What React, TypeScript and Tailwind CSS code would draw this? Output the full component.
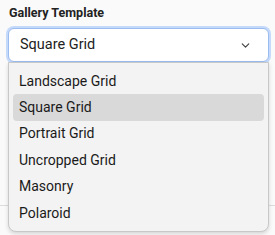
import React from "react";
import { ChevronDown } from "lucide-react";

const options = ["Landscape Grid", "Square Grid", "Portrait Grid", "Uncropped Grid", "Masonry", "Polaroid"];

export default function App() {
  const selected = "Square Grid";
  return (
    <div className="w-[275px] h-[235px] bg-[#fafafa] overflow-hidden relative" style={{ fontFamily: "Roboto, 'Liberation Sans', sans-serif" }}>
      <div className="pl-[9px] pr-[6px] pt-[4px] border-b border-[#dcdcdc] h-[206px]">
        <label className="block text-[12.5px] font-bold text-[#222] leading-[18px]">Gallery Template</label>
        <div className="relative mt-[6px] -ml-px">
          <div className="h-[34px] rounded-[6px] bg-white border border-[#9bbcf0] ring-2 ring-[#c5d9fb] flex items-center justify-between pl-[11px] pr-[16px]">
            <span className="text-[14.5px] text-[#222]">{selected}</span>
            <ChevronDown size={13} strokeWidth={2.2} className="text-[#444]" />
          </div>
          <div className="absolute left-0 right-0 top-[34px] z-10 bg-[#f3f3f3] border border-[#c8c8c8] rounded-b-[8px] shadow-[0_2px_4px_rgba(0,0,0,0.15)] px-[4px] pt-[5px] pb-[5px]">
            {options.map((o) => (
              <div
                key={o}
                className={`h-[26.4px] flex items-center pl-[6px] rounded-[4px] text-[14px] text-[#1a1a1a] ${o === selected ? "bg-[#d9d9d9]" : ""}`}
              >
                {o}
              </div>
            ))}
          </div>
        </div>
      </div>
    </div>
  );
}
